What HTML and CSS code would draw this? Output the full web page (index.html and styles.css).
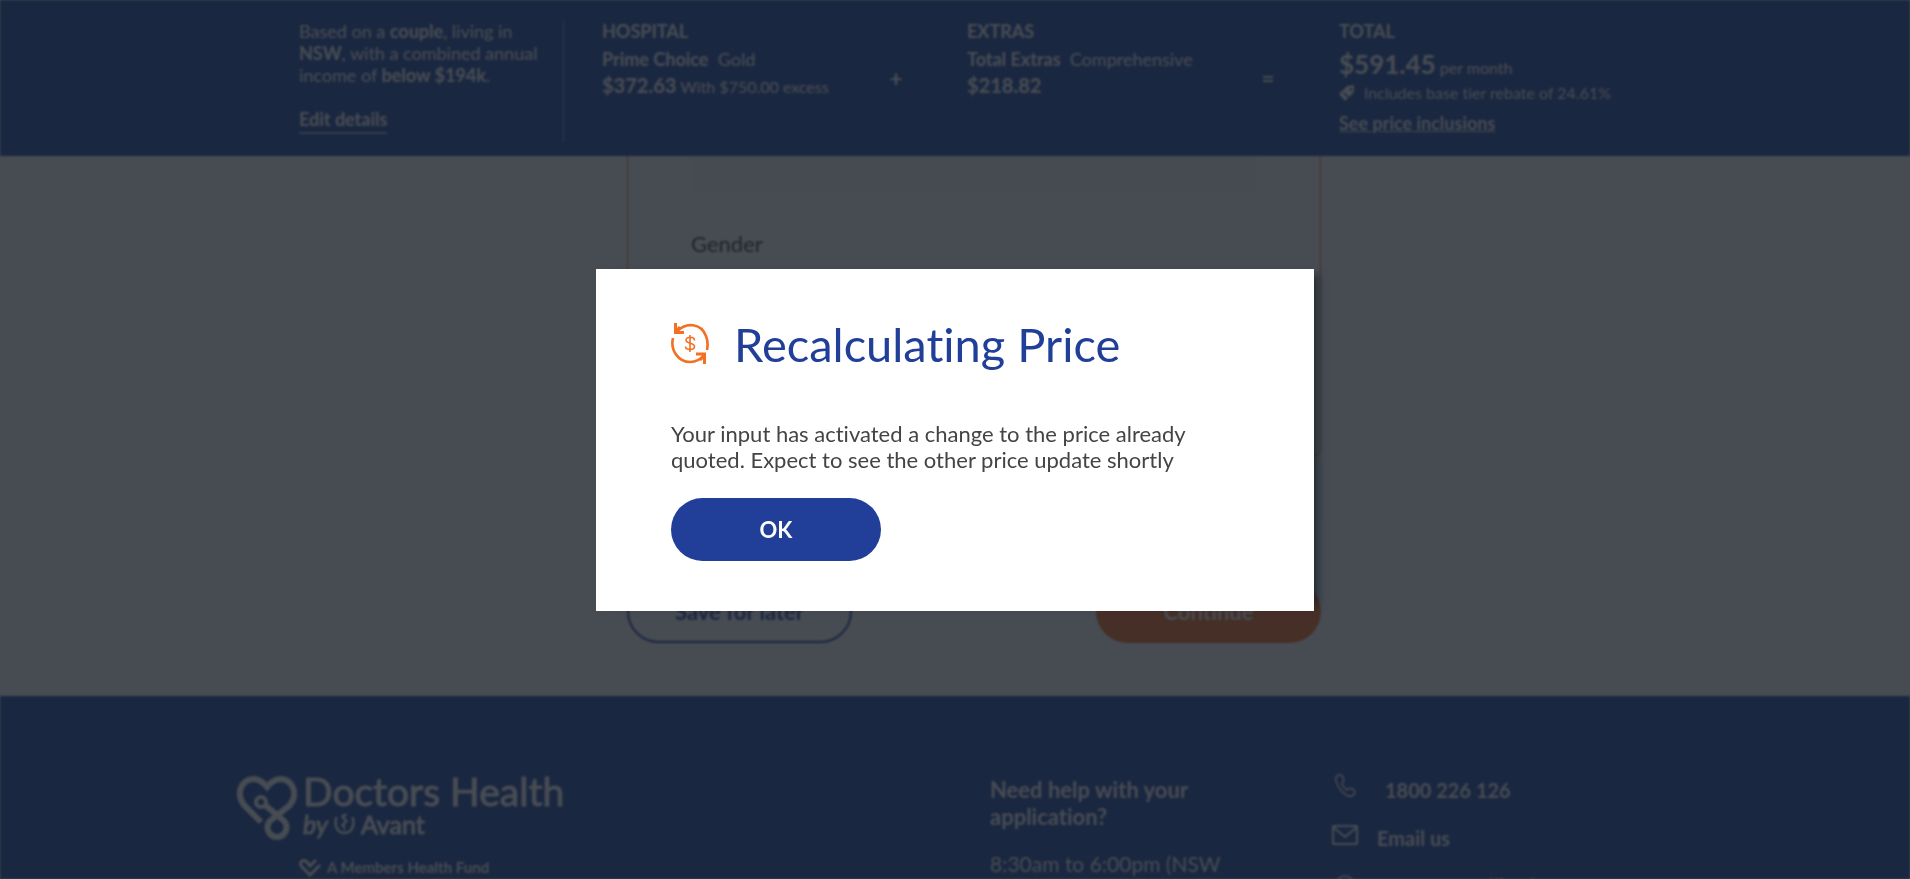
FILE: index.html
```html
<!DOCTYPE html>
<html lang="en">
<head>
<meta charset="utf-8">
<title>Doctors Health by Avant – Application</title>
<meta name="viewport" content="width=device-width, initial-scale=1">
<link rel="stylesheet" href="styles.css">
</head>
<body>
<div class="page">
  <header class="quote">
    <div class="quote-inner">
      <section class="details">
        <p class="details-text">Based on a <b>couple</b>, living in <b>NSW</b>, with a combined annual income of <b>below $194k</b>.</p>
        <a class="edit" href="#">Edit details</a>
      </section>
      <section class="product">
        <h2 class="label">HOSPITAL</h2>
        <p class="plan"><b>Prime Choice</b>&nbsp; Gold</p>
        <p class="price"><strong>$372.63</strong> With $750.00 excess</p>
      </section>
      <span class="operator">+</span>
      <section class="product">
        <h2 class="label">EXTRAS</h2>
        <p class="plan"><b>Total Extras</b>&nbsp; Comprehensive</p>
        <p class="price"><strong>$218.82</strong></p>
      </section>
      <span class="operator">=</span>
      <section class="product">
        <h2 class="label">TOTAL</h2>
        <p class="total"><strong>$591.45</strong> per month</p>
        <p class="rebate">
          <svg width="16" height="16" viewBox="0 0 16 16" aria-hidden="true"><path fill="currentColor" fill-rule="evenodd" d="M8 1 15 0 15 7 6 16 0 9ZM12 3a1.4 1.4 0 1 0 .1 0ZM4 8l5 5 1-1-5-5Z"/></svg>
          Includes base tier rebate of 24.61%
        </p>
        <a class="inclusions" href="#">See price inclusions</a>
      </section>
    </div>
  </header>

  <main class="main">
    <form class="form">
      <div class="card">
        <div class="field"></div>
        <h3 class="question">Gender</h3>
      </div>
      <div class="panel"></div>
      <div class="actions">
        <button type="button" class="btn btn-outline">Save for later</button>
        <button type="button" class="btn btn-orange">Continue</button>
      </div>
    </form>
  </main>

  <footer class="footer">
    <div class="footer-inner">
      <div class="brand">
        <svg class="brand-mark" width="60" height="66" viewBox="0 0 60 66" fill="none" stroke="currentColor" stroke-width="6" aria-hidden="true">
          <path d="M24 47 7 30C-1 20 3 5 16 4c6 0 10 3 14 8 4-5 8-8 14-8 13 1 17 16 9 26L33 46a9.500 9.500 0 1 0 14 0L28 30"/>
          <circle cx="24" cy="27" r="5" stroke-width="4"/>
        </svg>
        <div class="brand-text">
          <span class="brand-name">Doctors Health</span>
          <span class="brand-by"><i>by</i>
            <svg width="21" height="22" viewBox="0 0 21 22" fill="none" stroke="currentColor" aria-hidden="true"><path stroke-width="2.500" d="M2.500 4C0 12 3 20 10.500 20S21 12 18.500 4"/><path stroke-width="2" d="M13 2c-3-1-6 1-4 3l3 2c2 2-1 3-3 4s0 3 2 4"/><path d="M10.500 1v17"/></svg>Avant</span>
        </div>
        <p class="fund">
          <svg width="22" height="19" viewBox="0 0 22 19" fill="none" stroke="currentColor" stroke-width="3" aria-hidden="true"><path d="M17 2l-6 6-3-4C4 0-1 5 3 9l8 8L21 7"/></svg>
          A Members Health Fund
        </p>
      </div>
      <div class="help">
        <h3 class="help-title">Need help with your application?</h3>
        <p class="hours">8:30am to 6:00pm (NSW time)</p>
      </div>
      <ul class="contact">
        <li><svg width="28" height="28" viewBox="0 0 28 28" fill="none" stroke="currentColor" stroke-width="1.500" aria-hidden="true"><path d="M8 2c-3 1-4 3-3 6 2 6 6 12 12 15 3 1 7-1 7-4 0-2-5-5-7-3l-1 1c-2-1-5-5-5-7l1-1c2-3-1-8-4-7Z"/></svg><a class="phone" href="tel:1800226126">1800 226 126</a></li>
        <li><svg width="28" height="28" viewBox="0 0 28 28" fill="none" stroke="currentColor" stroke-width="2" aria-hidden="true"><rect x="2" y="5" width="24" height="18" rx="1"/><path d="M2 6 14 16 26 6"/></svg><a href="#">Email us</a></li>
        <li><svg width="28" height="28" viewBox="0 0 28 28" fill="none" stroke="currentColor" stroke-width="1.500" aria-hidden="true"><circle cx="14" cy="16" r="9"/><path d="M14 10v6h4"/></svg><a href="#">Request a callback</a></li>
      </ul>
    </div>
  </footer>
</div>

<div class="overlay">
  <div class="modal" role="dialog" aria-modal="true" aria-labelledby="modal-title">
    <div class="modal-head">
      <svg width="38" height="41" viewBox="0 0 38 41" aria-hidden="true">
        <g fill="none" stroke="#f36f21">
          <path stroke-width="2.600" d="M6 8.500C15-1 30 0 35 13c2 5 2 9 1 14M2 15c-3 13 6 24 17 24 6 0 11-3 14-7"/>
          <path stroke-width="3" d="M4.500 0v9.500H13M25 31h8.500v10M4 9l5-5M34 32l-5 5"/>
          <path stroke-width="1.600" d="M19 12v17M23.500 17.500c0-4.500-8.500-4-8.500-.5 0 4 8.500 2.500 8.500 6.500s-9 4-9 0"/>
        </g>
      </svg>
      <h1 class="modal-title" id="modal-title">Recalculating Price</h1>
    </div>
    <p class="modal-text">Your input has activated a change to the price already quoted. Expect to see the other price update shortly</p>
    <button type="button" class="btn btn-blue">OK</button>
  </div>
</div>
</body>
</html>
```
FILE: styles.css
```css
* { box-sizing: border-box; }
body {
  margin: 0;
  background: #fff;
  color: #333;
  font-family: Lato, "Open Sans", sans-serif;
  font-size: 18px;
  font-variant-ligatures: none;
}
h1, h2, h3, p, ul { margin: 0; padding: 0; font-weight: 400; }
a { color: inherit; }
button { font-family: inherit; }

.page {
  display: flex;
  flex-direction: column;
  height: 100vh;
  overflow: hidden;
  filter: blur(1px);
}

/* Quote summary bar */
.quote { flex: none; background: #1f459f; color: #fff; }
.quote-inner {
  display: grid;
  grid-template-columns: 265px 269px 96px 276px 96px 1fr;
  max-width: 1352px;
  margin: 0 auto;
  padding: 20px 20px 14px;
}
.details {
  border-right: 1px solid rgba(255, 255, 255, .5);
  line-height: 22px;
}
.edit {
  display: inline-block;
  margin-top: 20px;
  border-bottom: 2px solid rgba(255, 255, 255, .6);
  font-weight: 700;
  line-height: 26px;
  text-decoration: none;
}
.product { padding-left: 38px; white-space: nowrap; }
.label { font-size: 18px; font-weight: 700; line-height: 22px; }
.plan { margin-top: 4px; line-height: 26px; }
.price { font-size: 16px; line-height: 26px; }
.price strong { font-size: 20px; }
.operator { padding: 45px 0 0 30px; text-align: center; font-size: 22px; font-weight: 700; }
.total { margin-top: 8px; font-size: 16px; line-height: 28px; }
.total strong { font-size: 26px; }
.rebate { display: flex; align-items: center; gap: 9px; font-size: 16px; line-height: 22px; }
.inclusions { display: block; font-weight: 700; line-height: 38px; }

/* Application form */
.main { flex: none; padding-left: 38px; }
.form { width: 100%; max-width: 694px; margin: 0 auto; }
.card {
  height: 300px;
  padding: 0 63px;
  border: solid #f36f21;
  border-width: 0 1px 1px;
  border-radius: 0 0 6px 6px;
}
.field { height: 38px; background: #fafafa; }
.question { margin-top: 36px; font-size: 22px; line-height: 28px; }
.panel { height: 62px; margin-top: 5px; border-radius: 4px; box-shadow: 0 0 3px rgba(0, 0, 0, .3); }
.actions { display: flex; justify-content: space-between; padding: 57px 0 53px; }
.btn {
  height: 63px;
  border: 0;
  border-radius: 32px;
  color: #fff;
  font-size: 22px;
  font-weight: 700;
}
.btn-outline { width: 225px; border: 2px solid #213f99; background: #fff; color: #213f99; }
.btn-orange { width: 225px; background: #f36f21; }
.btn-blue { width: 210px; background: #213f99; }

/* Footer */
.footer { flex: 1; background: #1f459f; color: #fff; }
.footer-inner {
  display: grid;
  grid-template-columns: 753px 341px 1fr;
  max-width: 1436px;
  margin: 0 auto;
  padding-top: 77px;
}
.brand { display: grid; grid-template-columns: 66px 1fr; align-content: start; }
.brand-mark { margin-top: 2px; }
.brand-name { display: block; font-size: 39px; line-height: 36px; -webkit-text-stroke: 1px; }
.brand-by { display: flex; align-items: center; gap: 6px; font-size: 25px; line-height: 30px; -webkit-text-stroke: 1px; }
.fund {
  grid-column: 1 / -1;
  display: flex;
  align-items: center;
  gap: 6px;
  padding: 16px 0 0 62px;
  font-size: 15px;
  font-weight: 700;
  line-height: 20px;
}
.help { width: 240px; }
.help-title { margin-top: 3px; font-size: 22px; font-weight: 700; line-height: 27px; }
.hours { margin-top: 20px; font-size: 21px; line-height: 28px; }
.contact { list-style: none; font-size: 20px; font-weight: 700; }
.contact li { display: flex; gap: 18px; height: 48px; line-height: 34px; }
.contact a { text-decoration: none; }
.phone { padding-left: 8px; }

/* Dialog */
.overlay {
  position: fixed;
  inset: 0;
  display: flex;
  align-items: center;
  justify-content: center;
  background: rgba(25, 31, 40, .8);
}
.modal {
  width: 100%;
  max-width: 718px;
  padding: 50px 75px;
  background: #fff;
  box-shadow: 10px 0 8px -6px rgba(20, 30, 35, .7);
}
.modal-head { display: flex; align-items: flex-start; gap: 25px; }
.modal-head svg { margin-top: 4px; }
.modal-title { color: #213f99; font-size: 47px; line-height: 50px; }
.modal-text { margin: 52px 0 25px; color: #444; font-size: 22px; line-height: 26px; }
```
